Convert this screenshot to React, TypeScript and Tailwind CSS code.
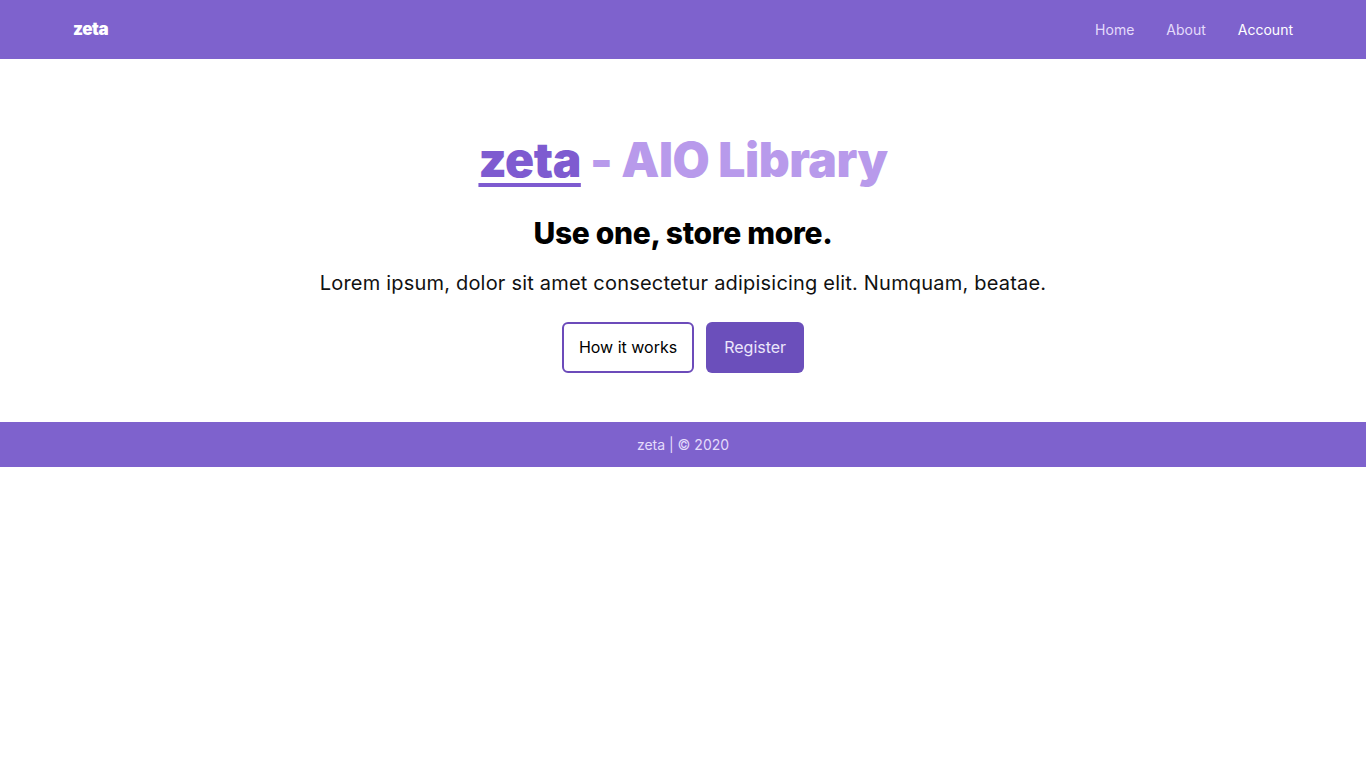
export default function App() {
  const links = ["Home", "About", "Account"];

  return (
    <div className="min-h-screen bg-white font-['Inter',sans-serif]">
      {/* Navbar */}
      <nav className="h-[59px] bg-[#7e62cd] flex items-center justify-between px-[73px]">
        <span className="text-white font-black text-[17px] tracking-tight">zeta</span>
        <ul className="flex items-center gap-[32px]">
          {links.map((l) => (
            <li
              key={l}
              className={`text-[14px] ${l === "Account" ? "text-white" : "text-[#e4dbfb]"}`}
            >
              {l}
            </li>
          ))}
        </ul>
      </nav>

      {/* Hero */}
      <section className="flex flex-col items-center text-center pt-[77px] pb-[49px]">
        <h1 className="text-[48px] font-black leading-none tracking-[-0.01em]">
          <a href="#" className="text-[#7e5bd0] underline underline-offset-[6px] decoration-[4px]">
            zeta
          </a>
          <span className="text-[#b89aeb]"> - AIO Library</span>
        </h1>
        <h2 className="mt-[34px] text-[30px] font-extrabold text-black leading-none tracking-[-0.01em]">
          Use one, store more.
        </h2>
        <p className="mt-[25px] text-[20px] text-[#111] leading-none tracking-[0.01em]">
          Lorem ipsum, dolor sit amet consectetur adipisicing elit. Numquam, beatae.
        </p>
        <div className="mt-[29px] flex gap-[12px]">
          <button className="h-[51px] px-[15px] pb-[2px] border-2 border-[#6c4bba] rounded-[6px] text-[16px] text-black bg-white">
            How it works
          </button>
          <button className="h-[51px] px-[18px] pb-[2px] rounded-[6px] text-[16px] text-[#ece6fb] bg-[#6b4fbb]">
            Register
          </button>
        </div>
      </section>

      {/* Footer */}
      <footer className="h-[45px] bg-[#7e62cd] flex items-center justify-center text-[14px] text-[#e4dbfb]">
        zeta | © 2020
      </footer>
    </div>
  );
}
